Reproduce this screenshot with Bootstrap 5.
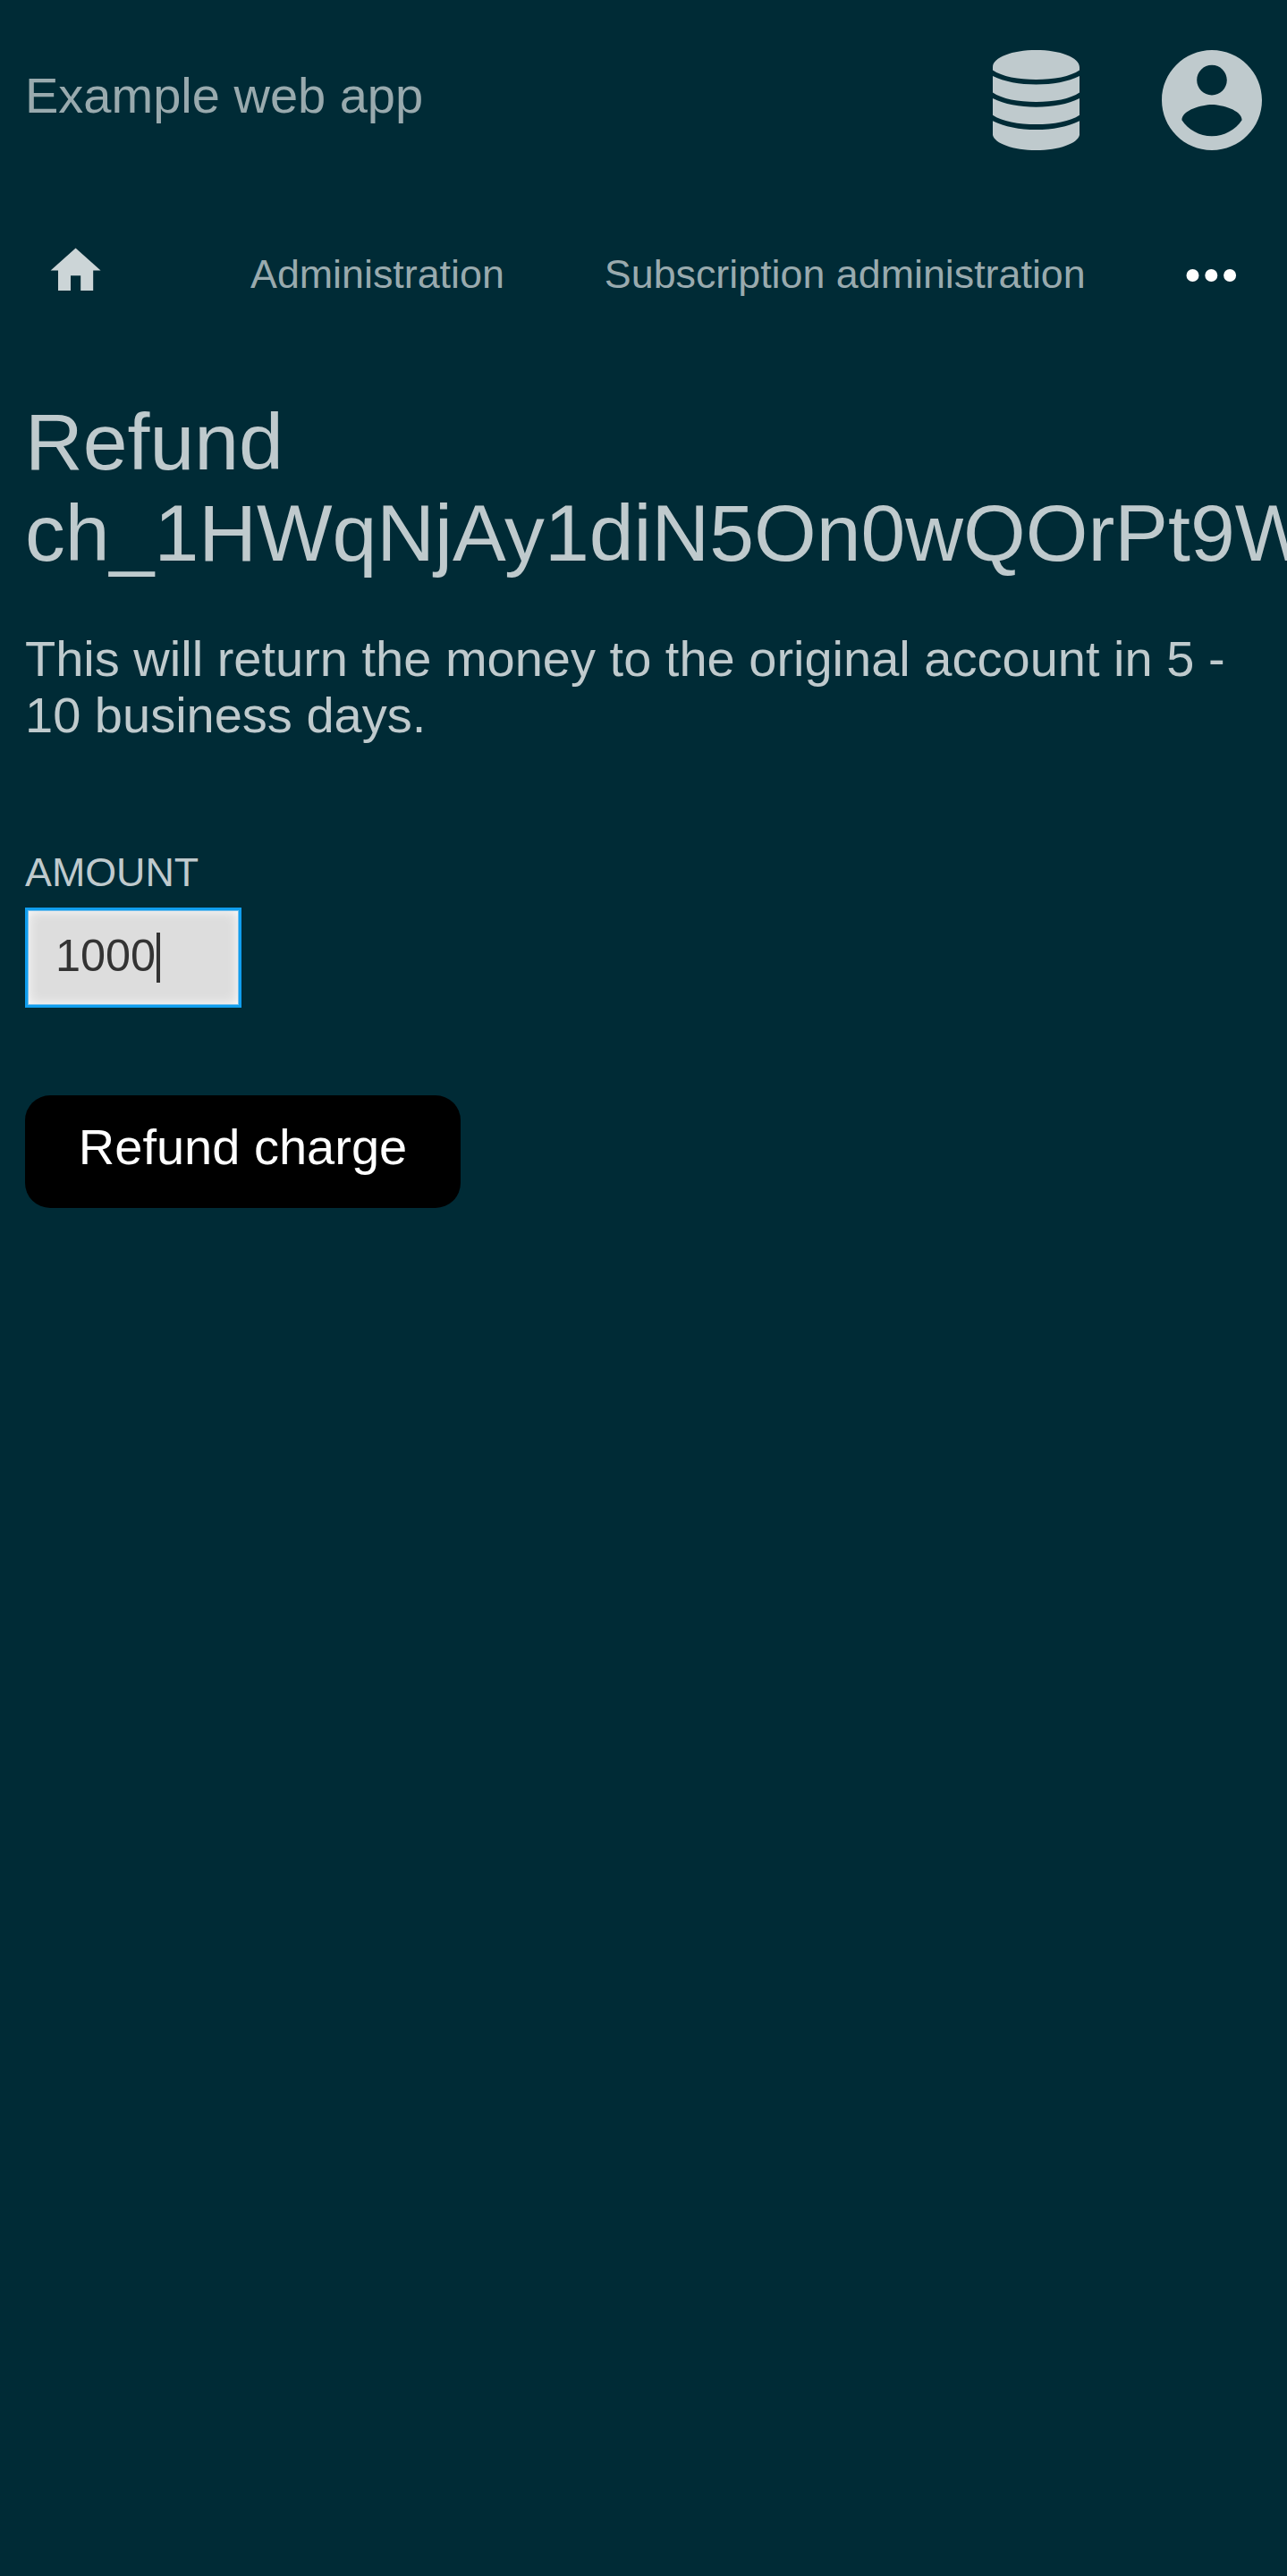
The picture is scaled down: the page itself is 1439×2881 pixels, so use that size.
<!DOCTYPE html>
<html lang="en">
<head>
<meta charset="utf-8">
<title>Refund charge</title>
<link href="https://cdn.jsdelivr.net/npm/bootstrap@5.3.0/dist/css/bootstrap.min.css" rel="stylesheet">
<style>
body { background: #002b36; color: #bfcacd; font: 56px/63px "Liberation Sans", Arial, sans-serif; min-height: 2881px; }
.page { padding: 56px 28px 0; overflow: hidden; }
.brand { color: #99aaae; margin-top: 19px; line-height: 63px; }
.topbar { height: 112px; }
.topbar svg, .tabs svg { display: block; }
.acct { margin-left: 91px; }
.tabs { height: 67px; margin-top: 101px; font-size: 44.8px; line-height: 52px; color: #99aaae; }
.home-link { margin-left: 23px; width: 229px; color: #ccd5d7; }
.tab-link { color: inherit; text-decoration: none; white-space: nowrap; margin-top: 11px; }
.tab-sub { margin-left: 112px; }
.more { margin: 31px 26px 0 auto; }
.refund-title { font-size: 89.6px; line-height: 102px; font-weight: 400; margin: 107px 0 58px; color: inherit; white-space: nowrap; }
.amount-label { font-size: 44.8px; line-height: 52px; margin: 118px 0 14px; display: block; }
.amount-box { width: 242px; height: 112px; padding: 25px 30px 0 31px; border: 3px solid #109eee; border-radius: 0; background: #ddd; color: #333; font-size: 50.4px; line-height: 52px; box-shadow: inset 0 0 0 1px #74bfec, inset 0 0 14px #fff; }
.caret { width: 4px; height: 56px; background: #333; margin-left: 1px; }
.btn-refund { margin-top: 98px; width: 487px; height: 126px; padding: 26px 0 37px; border: 0; border-radius: 28px; background: #000; color: #fff; font-size: 56px; line-height: 63px; }
</style>
<script src="https://cdn.jsdelivr.net/npm/bootstrap@5.3.0/dist/js/bootstrap.bundle.min.js"></script>
</head>
<body>
<div class="page">
  <header class="topbar d-flex align-items-start">
    <div class="brand me-auto">Example web app</div>
    <svg width="97" height="112" viewBox="0 0 97 112" fill="#bfcacd"><path d="M0 19C0 8 22 0 48.500 0S97 8 97 19V22.500C87 29.500 68 33 48.500 33S10 29.500 0 22.500ZM0 29C13 35.500 30 38.500 48.500 38.500S84 35.500 97 29V47.500C87 54.500 68 58 48.500 58S10 54.500 0 47.500ZM0 54C13 60.500 30 63.700 48.500 63.700S84 60.500 97 54V72.700C87 79.700 68 83 48.500 83S10 79.700 0 72.700ZM0 79.200C13 85.700 30 89 48.500 89S84 85.700 97 79.200V95C95 104.500 74 112 48.500 112S2 104.500 0 95Z"/></svg>
    <svg class="acct" width="113" height="112" viewBox="1.820 2 20.180 20" fill="#bfcacd"><path d="M12 2C6.480 2 2 6.480 2 12s4.480 10 10 10 10-4.480 10-10S17.520 2 12 2zm0 3c1.660 0 3 1.340 3 3s-1.340 3-3 3-3-1.340-3-3 1.340-3 3-3zm0 14.200c-2.500 0-4.710-1.280-6-3.220.03-1.990 4-3.080 6-3.080 1.990 0 5.970 1.090 6 3.080-1.290 1.940-3.500 3.220-6 3.220z"/></svg>
  </header>
  <nav class="tabs d-flex align-items-start">
    <a class="home-link" href="#" aria-label="Home"><svg width="67.200" height="67.200" viewBox="0 0 24 24" fill="currentColor"><path d="M10 20v-6h4v6h5v-8h3L12 3 2 12h3v8z"/></svg></a>
    <a class="tab-link" href="#">Administration</a>
    <a class="tab-link tab-sub" href="#">Subscription administration</a>
    <svg class="more" width="60" height="16" viewBox="0 0 60 16" fill="#fff"><circle cx="8.500" cy="8" r="7"/><circle cx="29.300" cy="8" r="7"/><circle cx="50.100" cy="8" r="7"/></svg>
  </nav>
  <main>
    <h1 class="refund-title">Refund<br>ch_1HWqNjAy1diN5On0wQOrPt9W</h1>
    <p class="mb-0">This will return the money to the original account in 5 - 10 business days.</p>
    <form>
      <label class="amount-label" id="amount-label">AMOUNT</label>
      <div class="amount-box form-control d-flex" role="textbox" aria-labelledby="amount-label"><span>1000</span><span class="caret"></span></div>
      <button type="button" class="btn btn-refund d-block">Refund charge</button>
    </form>
  </main>
</div>
</body>
</html>
